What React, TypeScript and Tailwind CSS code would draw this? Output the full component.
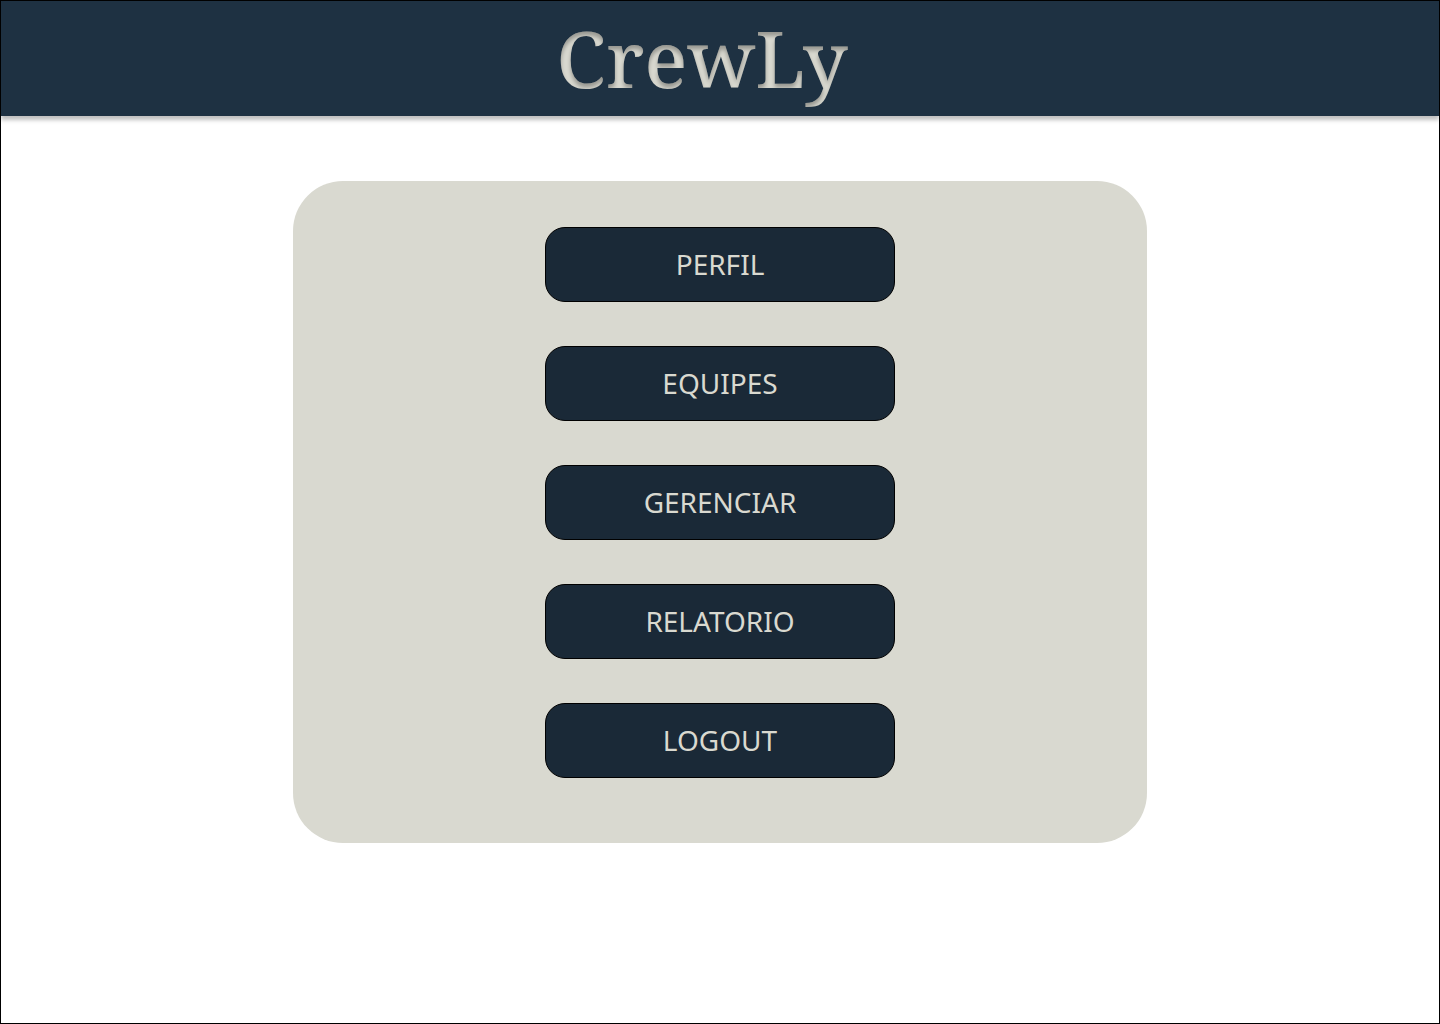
const items = ["PERFIL", "EQUIPES", "GERENCIAR", "RELATORIO", "LOGOUT"];

function InsetShadowFilter() {
  return (
    <svg aria-hidden="true" className="absolute size-0">
      <filter id="logo-inset" x="-10%" y="-10%" width="120%" height="120%" colorInterpolationFilters="sRGB">
        <feOffset in="SourceAlpha" dy="4" result="moved" />
        <feGaussianBlur in="moved" stdDeviation="2" result="blurred" />
        <feComposite in="SourceAlpha" in2="blurred" operator="out" result="edge" />
        <feColorMatrix in="edge" type="matrix" values="0 0 0 0 0  0 0 0 0 0  0 0 0 0 0  0 0 0 0.3 0" result="shade" />
        <feMerge>
          <feMergeNode in="SourceGraphic" />
          <feMergeNode in="shade" />
        </feMerge>
      </filter>
    </svg>
  );
}

export default function App() {
  return (
    <div className="flex min-h-screen flex-col border border-black bg-white">
      <InsetShadowFilter />
      <header className="flex h-[115px] items-center justify-center bg-[#1e3142] pr-9 pb-0.5 shadow-[0_4px_4px_rgba(0,0,0,0.25)]">
        <h1 className="font-['Noto_Serif','DejaVu_Serif',serif] text-[79px] leading-none font-medium text-[#d9d9d0] [filter:url(#logo-inset)]">
          CrewLy
        </h1>
      </header>
      <main className="flex justify-center px-6 pt-[65px] pb-10">
        <nav
          aria-label="Menu principal"
          className="flex w-full max-w-[854px] flex-col items-center gap-11 rounded-[50px] bg-[#d9d9d0] px-6 pt-[46px] pb-[65px]"
        >
          {items.map((item) => (
            <button
              key={item}
              type="button"
              className="h-[75px] w-full max-w-[350px] cursor-pointer rounded-[20px] border border-black bg-[#1a2937] pb-0.5 font-['Noto_Sans',sans-serif] text-[28px] leading-9 text-[#d9d9d0]"
            >
              {item}
            </button>
          ))}
        </nav>
      </main>
    </div>
  );
}
